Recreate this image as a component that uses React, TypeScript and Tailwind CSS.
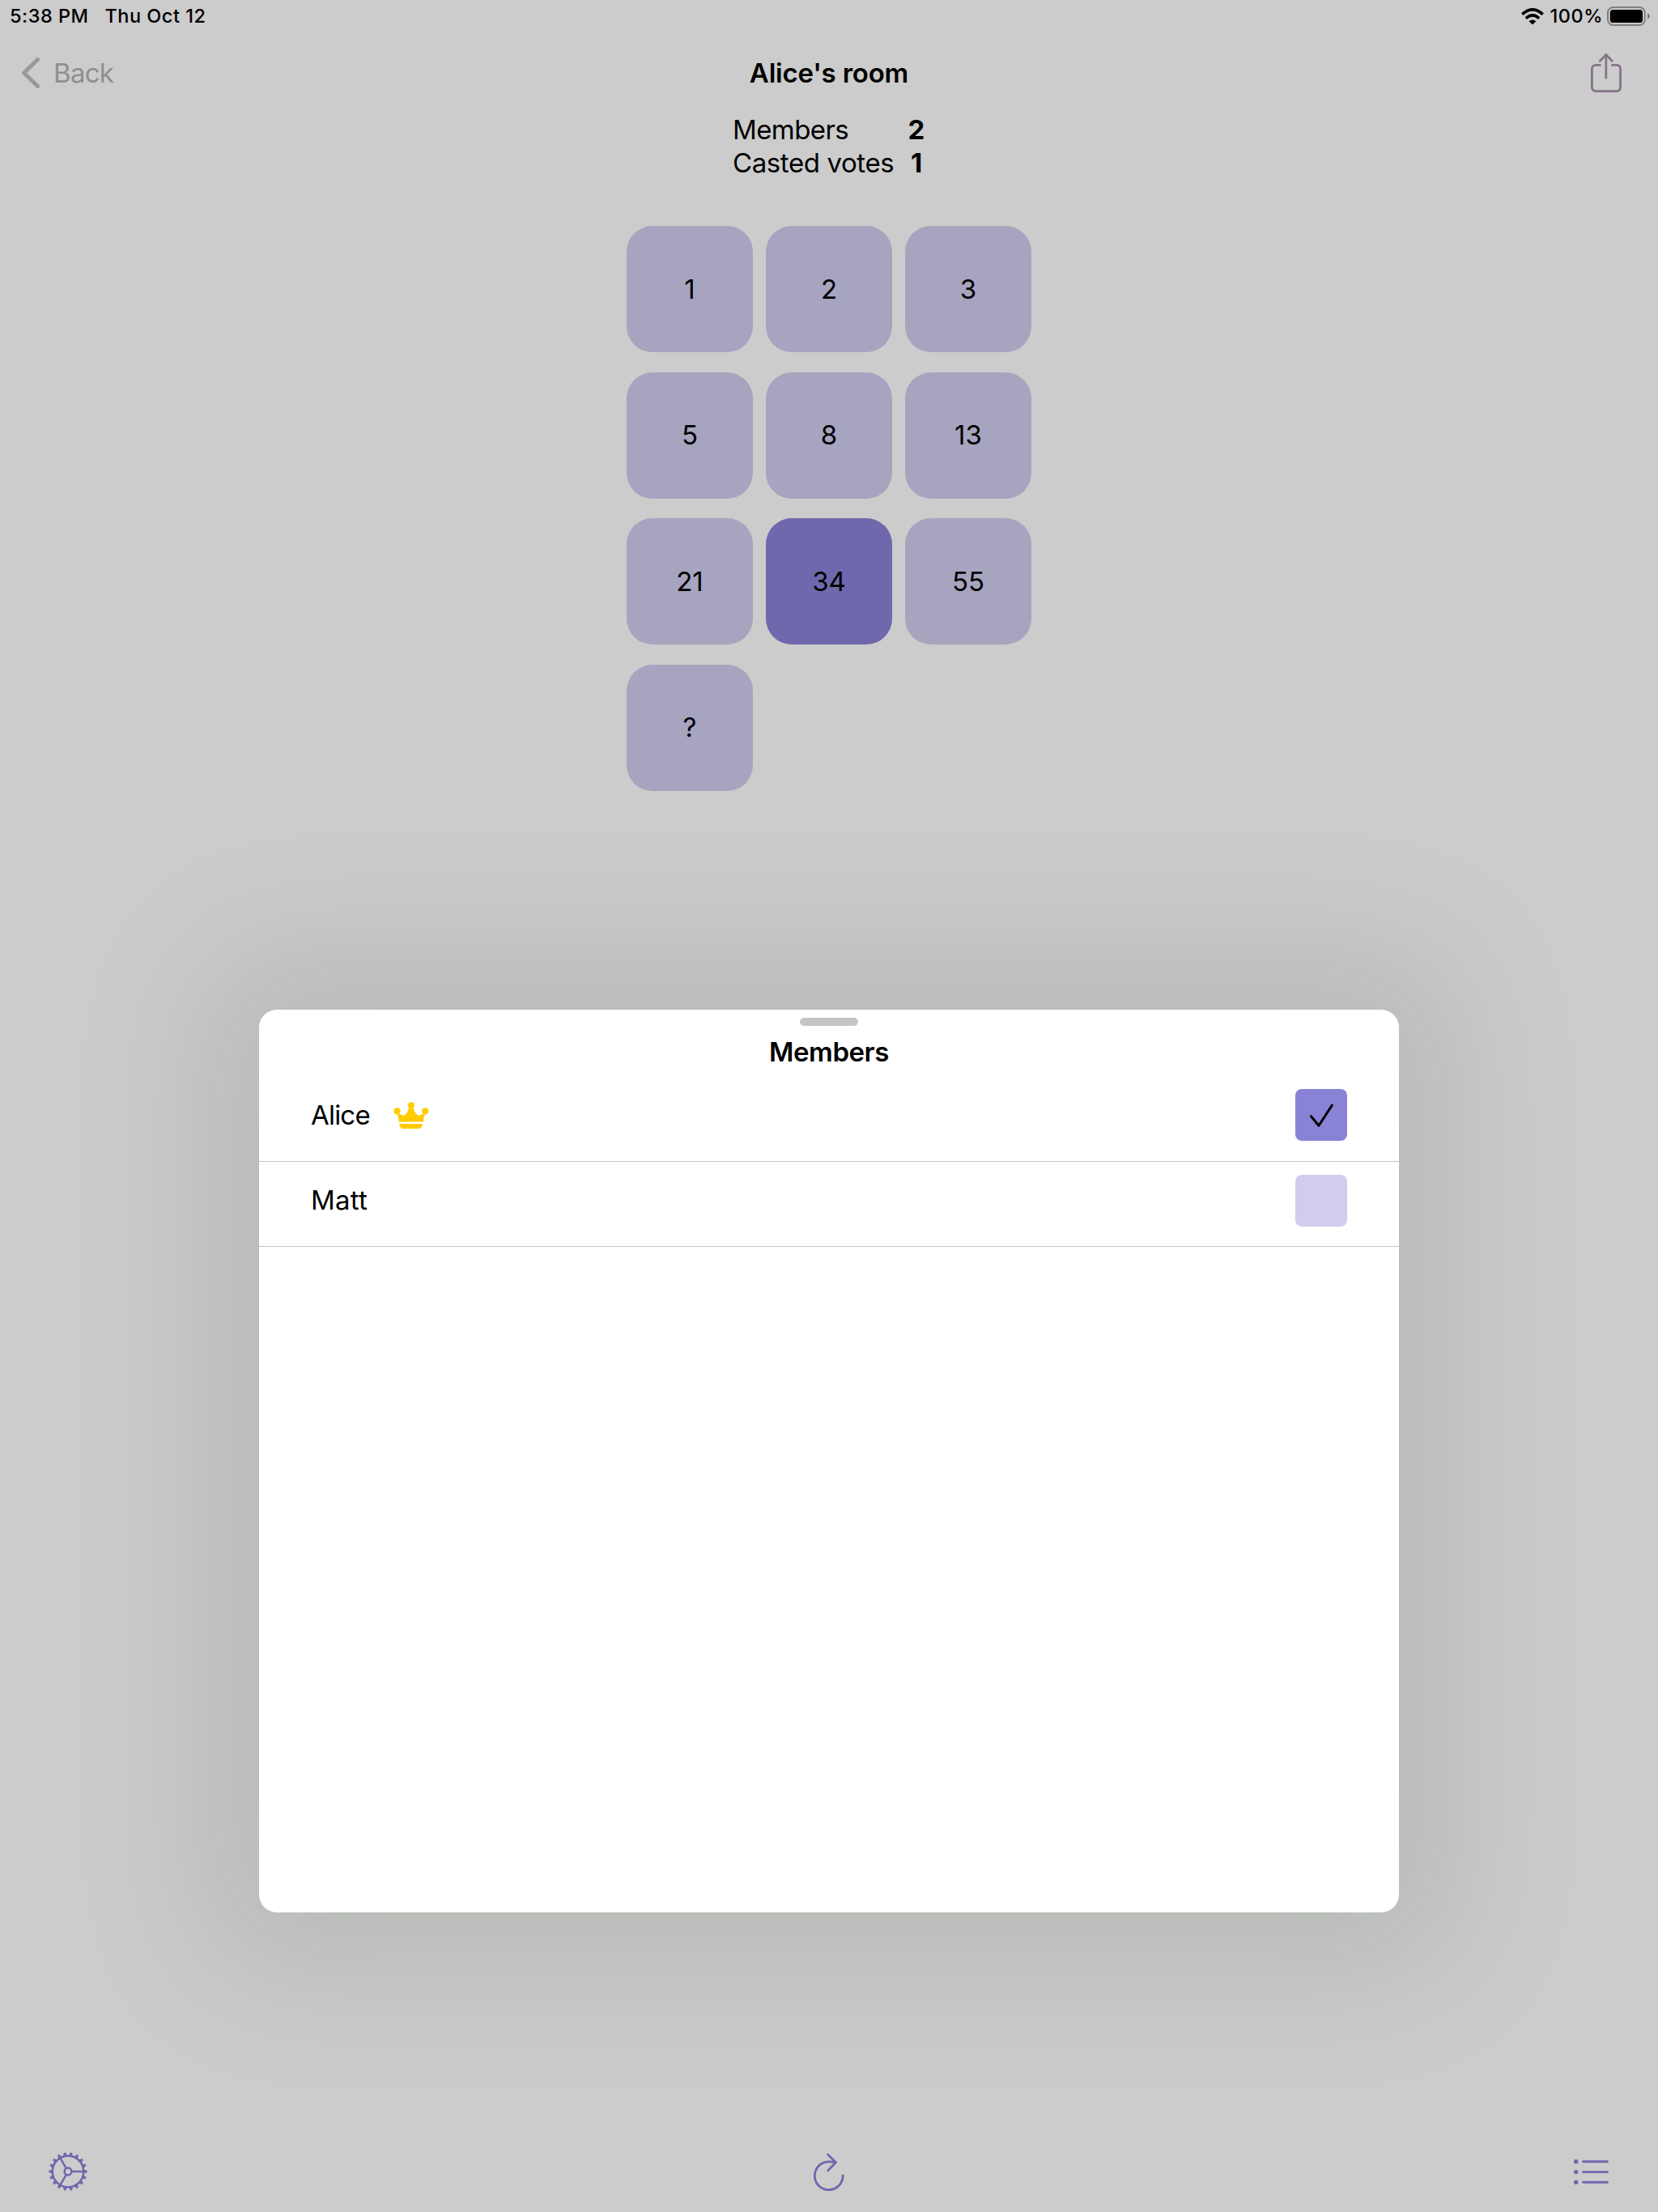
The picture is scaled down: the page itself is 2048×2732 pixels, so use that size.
const CARDS = ['1', '2', '3', '5', '8', '13', '21', '34', '55', '?'];
const PICKED = '34';

function Wifi() {
  return (
    <svg width="28" height="21" viewBox="0 0 28 21">
      <path fill="none" stroke="#000" strokeWidth="3.700" d="M1.300 7.600Q14 -3.800 26.700 7.600M5.900 12.600Q14 5.200 22.100 12.600" />
      <path d="M9.600 16.200Q14 12.600 18.400 16.200L14 20.500Z" />
    </svg>
  );
}

function Battery() {
  return (
    <svg width="54" height="24" viewBox="0 0 54 24">
      <rect x="1" y="1" width="45.700" height="22" rx="6.500" fill="none" stroke="#7f7f7f" strokeWidth="2" />
      <rect x="3.800" y="4" width="40.200" height="16" rx="3.600" />
      <path fill="#7f7f7f" d="M50 8Q53 9.500 53 12T50 16Z" />
    </svg>
  );
}

function Share() {
  return (
    <svg width="40" height="50" viewBox="0 0 40 50" fill="none" stroke="#85748a" strokeWidth="2.800" strokeLinecap="round" strokeLinejoin="round">
      <path strokeLinecap="butt" d="M13.700 15.400H7.400Q2.400 15.400 2.400 20.400V42.600Q2.400 47.600 7.400 47.600H32.600Q37.600 47.600 37.600 42.600V20.400Q37.600 15.400 32.600 15.400H26.300" />
      <path d="M19.800 31.300V2.600M12.300 10.200L19.800 2.500L27.300 10.200" />
    </svg>
  );
}

function Crown() {
  return (
    <svg className="ml-[29px] mt-px" width="44" height="34" viewBox="0 0 44 34" fill="#ffcc00">
      <circle cx="4.500" cy="11.300" r="4.100" />
      <circle cx="21.800" cy="4.300" r="4" />
      <circle cx="39.200" cy="11.300" r="4.100" />
      <path d="M4.600 14L13.400 17.100Q17.500 13.500 19.300 7.500H24.300Q26.200 13.500 30.400 17.100L39 14Q37.600 18.500 36.800 24.600H6.800Q6.200 18.500 4.600 14Z" />
      <path d="M7.300 27H35.900Q35.300 33 30.800 33H12.300Q7.900 33 7.300 27Z" />
    </svg>
  );
}

function Gear() {
  return (
    <svg width="50" height="50" viewBox="-25 -25 50 50" fill="none" stroke="#6f68ad" strokeWidth="2.500">
      <circle r="19.200" />
      <circle r="4.400" />
      <path d="M5 0H19M-2.500 -4.300L-9.600 -16.600M-2.500 4.300L-9.600 16.600" />
      {Array.from({ length: 18 }, (_, i) => (
        <path key={i} fill="#6f68ad" stroke="none" transform={`rotate(${i * 20})`} d="M19.500 -2.600L23.400 -1.200Q24.300 0 23.400 1.200L19.500 2.600Z" />
      ))}
    </svg>
  );
}

function Refresh() {
  return (
    <svg width="50" height="50" viewBox="0 0 50 50" fill="none" stroke="#6f68ad" strokeWidth="2.800" strokeLinecap="round" strokeLinejoin="round">
      <path d="M42.100 29.800A17.400 17.400 0 1 1 24.700 12.900Q28.500 12.900 33 13.800" />
      <path d="M23.700 4L33.500 13.800L23.700 23.700" />
    </svg>
  );
}

function List() {
  return (
    <svg width="46" height="32" viewBox="0 0 46 32" stroke="#6f68ad" strokeWidth="2.900" strokeLinecap="round">
      {[3.7, 16.6, 29.3].map((y) => (
        <g key={y}>
          <circle cx="4.700" cy={y} r="2.700" fill="#6f68ad" stroke="none" />
          <path d={`M13.600 ${y}H43.500`} />
        </g>
      ))}
    </svg>
  );
}

export default function App() {
  return (
    <div className="relative flex h-[2732px] w-[2048px] flex-col overflow-hidden bg-[#cccccc] font-['Inter',sans-serif] text-[33px] leading-[41px] text-black">
      <div className="flex h-10 items-center justify-between pl-3 pr-[9px] text-[23.5px] font-medium leading-[40px]">
        <div className="flex gap-5">
          <span className="tracking-[0.5px]">5:38 PM</span>
          <span className="tracking-[0.5px]">Thu Oct 12</span>
        </div>
        <div className="flex items-center">
          <Wifi />
          <span className="ml-2 mr-[5px] tracking-[0.5px]">100%</span>
          <Battery />
        </div>
      </div>

      <div className="grid h-[100px] grid-cols-3 items-center pl-[26px] pr-[44px]">
        <div className="flex items-center gap-4 text-[#8f8f8f]">
          <svg width="24" height="40" viewBox="0 0 24 40" fill="none" stroke="#999" strokeWidth="5" strokeLinecap="round" strokeLinejoin="round">
            <path d="M20.500 3.500L3.500 20L20.500 36.500" />
          </svg>
          <span className="tracking-[-0.7px]">Back</span>
        </div>
        <h1 className="pl-[18px] text-center font-semibold tracking-[-0.2px]">Alice's room</h1>
        <div className="flex justify-end">
          <Share />
        </div>
      </div>

      <div className="grid grid-cols-[216px_22px] justify-center whitespace-nowrap">
        <span className="tracking-[-0.6px]">Members</span>
        <b className="text-center font-bold">2</b>
        <span className="tracking-[-0.4px]">Casted votes</span>
        <b className="text-center font-bold">1</b>
      </div>

      <div className="mt-[57px] grid grid-cols-[repeat(3,156px)] justify-center gap-x-4 gap-y-[24.6px]">
        {CARDS.map((c) => (
          <div
            key={c}
            className={
              c === PICKED
                ? 'flex h-[156px] items-center justify-center rounded-[32px] bg-[#6f68ad]'
                : 'flex h-[156px] items-center justify-center rounded-[32px] bg-[#a7a4c0]'
            }
          >
            {c}
          </div>
        ))}
      </div>

      <div className="mt-auto grid h-[100px] grid-cols-3 items-center pl-[59px] pr-[60px]">
        <Gear />
        <div className="flex justify-center">
          <Refresh />
        </div>
        <div className="flex justify-end">
          <List />
        </div>
      </div>

      <section className="absolute left-[320px] top-[1247px] h-[1115px] w-[1408px] rounded-[22px] bg-white pt-[10px] shadow-[0_0_170px_66px_rgba(50,75,45,0.14)]">
        <div className="mx-auto h-[10px] w-[72px] rounded-full bg-[#c5c5c7]" />
        <h2 className="mt-3 text-center font-semibold tracking-[-0.45px]">Members</h2>
        <div className="mt-[10px] flex h-[105px] items-start justify-between border-b border-[#c6c6c8] px-16 pt-[15px]">
          <div className="flex h-16 items-center">
            <span className="tracking-[-0.8px]">Alice</span>
            <Crown />
          </div>
          <div className="size-16 rounded-lg bg-[#8983d6]">
            <svg width="64" height="64" viewBox="0 0 64 64" fill="none" stroke="#000" strokeWidth="3" strokeLinecap="round" strokeLinejoin="round">
              <path d="M19.500 33.700L29 45.300L45.400 20" />
            </svg>
          </div>
        </div>
        <div className="flex h-[105px] items-start justify-between border-b border-[#c6c6c8] px-16 pt-[16px]">
          <span className="mt-[11px] tracking-[0.2px]">Matt</span>
          <div className="size-16 rounded-lg bg-[#d1cdee]" />
        </div>
      </section>
    </div>
  );
}
